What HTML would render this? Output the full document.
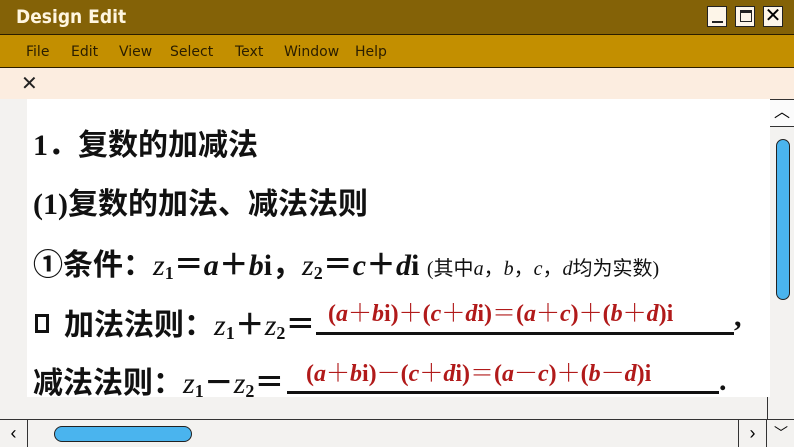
<!DOCTYPE html>
<html><head><meta charset="utf-8"><style>
*{margin:0;padding:0;box-sizing:border-box}
body{width:794px;height:447px;position:relative;overflow:hidden;background:#f3f2f0;font-family:"Liberation Serif","Noto Serif CJK SC",serif}
.a{position:absolute;white-space:nowrap}
#title{left:0;top:0;width:794px;height:35px;background:#846207;border-bottom:1px solid #2a1d00}
#title span{position:absolute;left:16px;top:6px;color:#fff6e0;font:bold 19px "DejaVu Sans Condensed","DejaVu Sans",sans-serif}
#menu{left:0;top:35px;width:794px;height:33px;background:#c38f00;border-bottom:1px solid #2a1d00;font:14px "DejaVu Sans",sans-serif;color:#2a1d00}
#menu span{position:absolute;top:9px}
#tab{left:0;top:68px;width:794px;height:31px;background:#fcede0}
.btn{position:absolute;top:6px;width:20px;height:21px;background:#fdf5e8;border:1px solid #222}
#page{left:27px;top:99px;width:743px;height:298px;background:#fff}
.cn{font-family:"Liberation Serif","Noto Sans CJK SC",sans-serif;font-weight:bold;font-size:30px;color:#111}
.r{color:#b11a1a;font-weight:bold;font-size:24px}
i{font-style:italic}
sub{font-size:60%;vertical-align:-4px}
.u{position:absolute;height:3px;background:#111}
</style></head><body>
<div class="a" id="title"><span>Design Edit</span>
<div class="btn" style="left:707px"><div style="position:absolute;left:4px;top:14px;width:11px;height:2px;background:#222"></div></div>
<div class="btn" style="left:735px"><div style="position:absolute;left:4px;top:3px;width:12px;height:12px;border:1px solid #222;border-top:3px solid #222"></div></div>
<div class="btn" style="left:763px;font:20px sans-serif;text-align:center;line-height:19px">✕</div>
</div>
<div class="a" id="menu"><span style="left:26px">File</span><span style="left:71px">Edit</span><span style="left:119px">View</span><span style="left:170px">Select</span><span style="left:235px">Text</span><span style="left:284px">Window</span><span style="left:355px">Help</span></div>
<div class="a" id="tab"><span style="position:absolute;left:21px;top:3px;font:20px sans-serif;color:#222">✕</span></div>
<div class="a" id="page"></div>
<div class="a cn" style="left:33px;top:120px">1．复数的加减法</div>
<div class="a cn" style="left:33px;top:179px">(1)复数的加法、减法法则</div>
<div class="a cn" style="left:33px;top:240px">①条件：<i style="font-weight:normal">z</i><sub>1</sub>＝<i>a</i>＋<i>b</i>i，<i style="font-weight:normal">z</i><sub>2</sub>＝<i>c</i>＋<i>d</i>i <span style="font-size:20px;font-weight:normal">(其中<i>a</i>，<i>b</i>，<i>c</i>，<i>d</i>均为实数)</span></div>
<div class="a" style="left:35px;top:314px;width:14px;height:19px;border:3px solid #111"></div>
<div class="a cn" style="left:64px;top:300px">加法法则：<i style="font-weight:normal">z</i><sub>1</sub>＋<i style="font-weight:normal">z</i><sub>2</sub>＝</div>
<div class="a r" style="left:328px;top:293px">(<i>a</i>＋<i>b</i>i)＋(<i>c</i>＋<i>d</i>i)＝(<i>a</i>＋<i>c</i>)＋(<i>b</i>＋<i>d</i>)i</div>
<div class="u" style="left:316px;top:332px;width:418px"></div>
<div class="a cn" style="left:734px;top:300px">,</div>
<div class="a cn" style="left:33px;top:358px">减法法则：<i style="font-weight:normal">z</i><sub>1</sub>－<i style="font-weight:normal">z</i><sub>2</sub>＝</div>
<div class="a r" style="left:306px;top:353px">(<i>a</i>＋<i>b</i>i)－(<i>c</i>＋<i>d</i>i)＝(<i>a</i>－<i>c</i>)＋(<i>b</i>－<i>d</i>)i</div>
<div class="u" style="left:287px;top:391px;width:432px"></div>
<div class="a cn" style="left:719px;top:364px">.</div>
<div class="a" style="left:770px;top:99px;width:24px;height:320px;background:#f3f2f0"></div>
<div class="a" style="left:770px;top:99px;width:24px;height:28px;border-top:1px solid #333;border-bottom:1px solid #333;background:#fbfbfb;text-align:center;font:16px sans-serif;line-height:26px">︿</div>
<div class="a" style="left:776px;top:139px;width:14px;height:161px;background:#4ab4ee;border:1.5px solid #222;border-radius:7px"></div>
<div class="a" style="left:0;top:419px;width:794px;height:28px;background:#f3f2f0;border-top:1px solid #333"></div>
<div class="a" style="left:0;top:420px;width:28px;height:27px;border-right:1px solid #333;font:18px sans-serif;text-align:center;line-height:26px">‹</div>
<div class="a" style="left:54px;top:426px;width:138px;height:16px;background:#4ab4ee;border:1.5px solid #222;border-radius:8px"></div>
<div class="a" style="left:738px;top:420px;width:29px;height:27px;border-left:1px solid #333;border-right:1px solid #333;font:18px sans-serif;text-align:center;line-height:26px">›</div>
<div class="a" style="left:767px;top:397px;width:1px;height:22px;background:#333"></div>
<div class="a" style="left:768px;top:420px;width:26px;height:27px;font:14px sans-serif;text-align:center;line-height:26px">﹀</div>
</body></html>
